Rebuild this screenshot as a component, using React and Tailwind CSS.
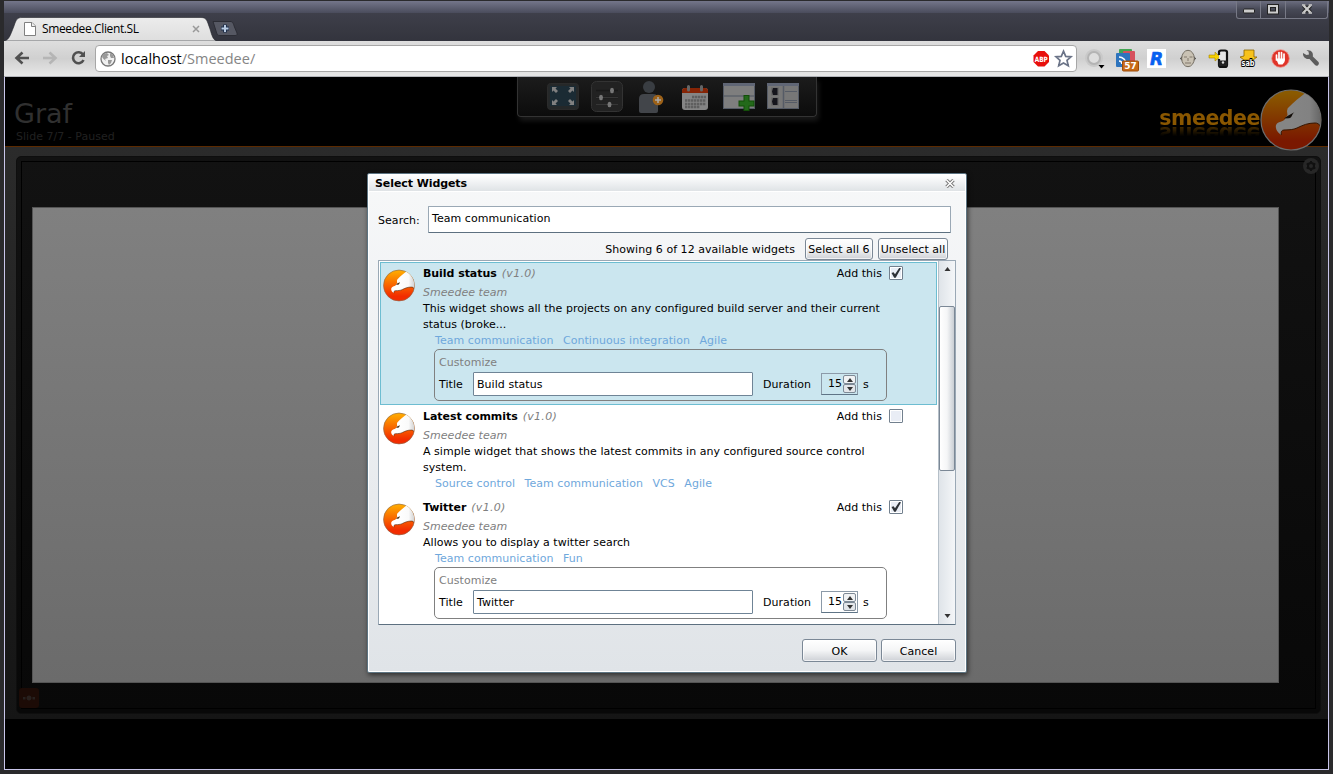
import React from "react";

const SANS = "font-['DejaVu_Sans','Liberation_Sans',sans-serif]";
const UI = "font-['Open_Sans','Noto_Sans',sans-serif]";

function Eagle({ id, className, dim }) {
  const top = dim ? "#8a5a00" : "#ffa800";
  const bottom = dim ? "#7a1800" : "#f22c00";
  return (
    <svg viewBox="0 0 62 62" className={className}>
      <defs>
        <linearGradient id={id} x1="0" y1="0" x2="0" y2="1">
          <stop offset="0.05" stopColor={top} />
          <stop offset="0.85" stopColor={bottom} />
        </linearGradient>
        <linearGradient id={id + "h"} x1="0" y1="0" x2="1" y2="0">
          <stop offset="0.3" stopColor={dim ? "#858585" : "#ffffff"} />
          <stop offset="0.75" stopColor={dim ? "#828282" : "#fafafa"} />
          <stop offset="1" stopColor={dim ? "#666666" : "#d2d2d2"} />
        </linearGradient>
      </defs>
      <circle cx="31" cy="31" r="30" fill={`url(#${id})`} stroke={dim ? "#6d6d6d" : "#8a6a50"} strokeWidth="1.2" />
      <path
        d="M44.700 4.500 C40 8 34 13 27.700 19.300 L27 22 L27.500 26 L24.300 31 C22 32.500 19 33 18 33.700 C16 35 15.500 37 16 39 C16.500 41.500 17.500 43 21.300 46 C20.800 42.500 21.500 41.300 24 41 C30 40.800 33 40.800 37 39 C43 36 48 34 55 34 C57.500 34 58.500 35 60 36.500 C63 23 56 10 44.700 4.500Z"
        fill={`url(#${id}h)`}
      />
      <path d="M21.300 46 C20.800 42.500 21.500 41.300 24 41 C30 40.800 33 40.800 37 39 C43 36 48 34 55 34 C57.500 34 58.500 35 60 36.500" fill="none" stroke="#351400" strokeWidth="1" />
      <path d={dim ? "M24 29.500 L27.500 27 L34.300 23.300 C32 25 32 29 29 29.300 Z" : "M25 29.500 L28 26.500 L33 24.500 C32 26 31.500 29 29 29.500 Z"} fill={dim ? "#120c08" : "#4a3018"} />
    </svg>
  );
}

function TabBar() {
  return (
    <div className="relative flex h-[40px] shrink-0 items-start bg-gradient-to-b from-[#74768a] via-[#4a4c5c] via-30% to-[#33343e]">
      <div className="absolute inset-x-0 top-[12px] h-[28px] bg-gradient-to-b from-[#3e3f4a] to-[#33343d]" />
      <div className="relative mt-[16px] flex h-[24px] w-[213px] items-center pl-[20px]">
        <svg viewBox="0 0 213 24" className="absolute inset-0 h-[24px] w-[213px]">
          <defs>
            <linearGradient id="tab" x1="0" y1="0" x2="0" y2="1">
              <stop offset="0" stopColor="#ececec" />
              <stop offset="1" stopColor="#dedede" />
            </linearGradient>
          </defs>
          <path d="M0 24 C5 23 6 19 10 9 C12 3 13 0.500 18 0.500 H197 C203 0.500 203 4 206 12 C208 19 209 23 213 24Z" fill="url(#tab)" stroke="#24252c" strokeWidth="0.600" />
        </svg>
        <svg viewBox="0 0 12 14" className="relative h-[14px] w-[12px]">
          <path d="M0.500 0.500 H8 L11.500 4 V13.500 H0.500Z" fill="#fff" stroke="#808080" />
          <path d="M7.500 0.500 V4.500 H11.500" fill="#eee" stroke="#808080" />
        </svg>
        <span className={`relative ml-[6px] text-[12px] leading-[16px] tracking-[-0.38px] whitespace-nowrap text-black ${UI}`}>Smeedee.Client.SL</span>
        <svg viewBox="0 0 8 8" className="relative mr-[17px] ml-auto h-[8px] w-[8px]">
          <path d="M1 1 L7 7 M7 1 L1 7" stroke="#999" strokeWidth="1.500" />
        </svg>
      </div>
      <svg viewBox="0 0 26 16" className="relative -ml-[5px] mt-[20px] h-[16px] w-[26px]">
        <path d="M1 0.500 H18 C21 0.500 21 2 22.500 6 L25 12 C25.500 14 25 14.500 23 14.500 H8 C5 14.500 5 13 4 10Z" fill="#565863" stroke="#2c2d35" />
        <path d="M13 3.500 V11.500 M9 7.500 H17" stroke="#1f2f4a" strokeWidth="4" />
        <path d="M13 4 V11 M9.500 7.500 H16.500" stroke="#b9cbe2" strokeWidth="2" />
      </svg>
      <div className="relative mr-[1px] ml-auto flex h-[18px] rounded-b-[3px] border-x border-b border-[#777986] bg-gradient-to-b from-[#6b6d7f] via-[#474956] to-[#3a3b46]">
        <div className="flex w-[24px] justify-center border-r border-[#777986]">
          <svg viewBox="0 0 12 6" className="mt-[7px] h-[6px] w-[12px]"><rect x="0.500" y="1" width="11" height="4" rx="1" fill="#ccc" stroke="#222" /></svg>
        </div>
        <div className="flex w-[25px] justify-center border-r border-[#777986]">
          <svg viewBox="0 0 12 11" className="mt-[3px] h-[11px] w-[12px]"><rect x="2" y="2" width="8" height="6.500" fill="none" stroke="#222" strokeWidth="4" /><rect x="2" y="2" width="8" height="6.500" fill="none" stroke="#ccc" strokeWidth="2" /></svg>
        </div>
        <div className="flex w-[41px] justify-center">
          <svg viewBox="0 0 12 11" className="mt-[3px] h-[11px] w-[12px]"><path d="M2.500 1.500 L9.500 8.500 M9.500 1.500 L2.500 8.500" stroke="#222" strokeWidth="4" /><path d="M2.500 1.500 L9.500 8.500 M9.500 1.500 L2.500 8.500" stroke="#ccc" strokeWidth="2.200" /><path d="M1 1 H4.500 M7.500 1 H11 M1 9 H4.500 M7.500 9 H11" stroke="#ccc" strokeWidth="1.400" /></svg>
        </div>
      </div>
    </div>
  );
}

function AddressBar() {
  return (
    <div className="flex h-[36px] shrink-0 items-start border-b border-[#b4b6bb] bg-gradient-to-b from-[#dedede] via-[#d0d0d0] to-[#e8e8e8] pt-[4px]">
      <svg viewBox="0 0 76 26" className="ml-[10px] h-[26px] w-[76px]">
        <path d="M8.500 7.500 L2.500 13 L8.500 18.500 M3 13 H15" fill="none" stroke="#505050" strokeWidth="2.600" />
        <path d="M35.500 7.500 L41.500 13 L35.500 18.500 M41 13 H29" fill="none" stroke="#b5b5b5" strokeWidth="2.600" />
        <path d="M69 9.500 A5.500 5.500 0 1 0 69.500 15" fill="none" stroke="#505050" strokeWidth="2.600" />
        <path d="M71 6 V12 H65Z" fill="#505050" />
      </svg>
      <div className="ml-[5px] flex h-[27px] w-[982px] items-center rounded-[4px] border border-[#a7a7a7] bg-white">
        <svg viewBox="0 0 16 16" className="ml-[4px] h-[16px] w-[16px]">
          <circle cx="8" cy="8" r="7" fill="#f0f0f0" stroke="#777" strokeWidth="1.300" />
          <path d="M3 3 L7 2 L9 4 L7 5 L8 7 L5 8 L6 10 L3.500 8 L2 6Z M10 2 L13 4 L14 7 L11 7 L10 5Z M8 9 L12 9 L11 12 L9 14 L8 12Z" fill="#999" />
        </svg>
        <div className={`ml-[5px] text-[14.500px] leading-[20px] tracking-[0px] whitespace-nowrap text-black ${UI}`}>localhost<span className="text-[#858585]">/Smeedee/</span></div>
        <svg viewBox="0 0 44 20" className="mr-[1px] ml-auto h-[20px] w-[44px]">
          <path d="M7 2 H13.500 L18 6.500 V13 L13.500 17.500 H7 L2.500 13 V6.500Z" fill="#e8100c" />
          <text x="3.800" y="12.600" fontSize="7.200" fontWeight="700" fill="#fff" className={SANS} textLength="13" lengthAdjust="spacingAndGlyphs">ABP</text>
          <path d="M32.500 2.200 L34.700 7.400 L40 7.800 L36 11.400 L37.300 16.800 L32.500 14 L27.700 16.800 L29 11.400 L25 7.800 L30.300 7.400Z" fill="#fff" stroke="#6b7488" strokeWidth="1.700" />
        </svg>
      </div>
      <svg viewBox="0 0 246 30" className="ml-[6px] mt-px h-[30px] w-[246px] overflow-visible">
        <g>
          <circle cx="11" cy="12" r="9" fill="#c9c9c9" /><circle cx="11" cy="12" r="6" fill="#dedede" stroke="#b4b4b4" strokeWidth="2" />
          <path d="M15.500 19 H21.500 L18.500 22.500Z" fill="#000" />
        </g>
        <rect x="36" y="3" width="13" height="11" rx="1" fill="#42a552" />
        <rect x="40" y="5" width="12" height="12" rx="1" fill="#d6515e" />
        <rect x="33" y="7" width="14" height="14" rx="1" fill="#2e74bd" />
        <path d="M36 11 A7 7 0 0 1 43 18 M36 15 A3 3 0 0 1 39 18" fill="none" stroke="#fff" strokeWidth="1.600" />
        <rect x="39.500" y="15" width="16" height="10" rx="1" fill="#c76a16" stroke="#9e4c08" />
        <text x="47.500" y="23" textAnchor="middle" fontSize="9" fontWeight="700" fill="#fff" className={SANS}>57</text>
        <rect x="64" y="3" width="19" height="19" fill="#fff" />
        <text x="73.500" y="18.500" textAnchor="middle" fontSize="17" fontWeight="700" fontStyle="italic" fill="#0860f0" stroke="#0860f0" strokeWidth="0.600" className={SANS}>R</text>
        <path d="M97 12.500 L105 4 L113 12.500 L105 21Z" fill="#333" />
        <ellipse cx="105" cy="12.500" rx="6.300" ry="8.200" fill="#c9c2b4" stroke="#777166" />
        <path d="M101 11 h3 M106.500 11 h3 M102 17 h6 M105 12 v3" stroke="#82796c" />
        <path d="M126 9 H132 V6 L137 11 L132 15 V12 H126Z" fill="#f7d100" stroke="#a48500" strokeWidth="0.600" />
        <path d="M136 9 V6 Q136 4.500 138 4.500 H142 Q144 4.500 144 6 V19 Q144 21 142 21 H138 Q136 21 136 19 V13" fill="#e4e4e4" stroke="#111" strokeWidth="2.200" />
        <path d="M135.500 14.500 H144.500 V20 H135.500Z" fill="#222" /><circle cx="140" cy="16.500" r="1.200" fill="#ddd" />
        <path d="M161 4 H171 V11 H174 L170 14 H161 L157 11 L161 10Z" fill="#f7c21c" stroke="#8a6500" strokeWidth="0.800" />
        <text x="158.500" y="20" fontSize="8.500" fontWeight="700" fill="#fff" stroke="#000" strokeWidth="2" paintOrder="stroke" className={SANS} textLength="13" lengthAdjust="spacingAndGlyphs">sab</text>
        <circle cx="197.500" cy="12.500" r="8.800" fill="#df3429" stroke="#ef8e86" strokeWidth="0.800" />
        <path d="M193.500 9 V14 M196 6.500 V13 M198.500 6.500 V13 M201 8 V14" stroke="#fff" strokeWidth="1.700" strokeLinecap="round" />
        <path d="M193 12.500 H202 L201.500 16 L199.500 18.500 H195.500Z" fill="#fff" />
        <path d="M220 7 L223.500 9 L226 8.500 L225.500 5.500 L223.500 4.500 C228.500 3.500 230.500 7 229.800 10.500 L235.500 16 C237 18.500 234 21 232 19 L226.500 13 C223 13.500 219.500 11 220 7Z" fill="#5c5c5c" />
      </svg>
    </div>
  );
}

const DimIcon = ({ children }) => <svg viewBox="0 0 32 36" className="h-[36px] w-[32px]">{children}</svg>;

function Toolbar() {
  return (
    <div className="absolute top-0 left-[512px] flex h-[40px] w-[300px] gap-[12px] rounded-b-[4px] border-x border-b border-[#333] bg-gradient-to-b from-[#1c1c1c] to-[#0c0c0c] pt-[2px] pl-[29px] shadow-[2px_4px_5px_#181818]">
      <DimIcon>
        <rect x="0.500" y="4.500" width="31" height="26" rx="3" fill="#252829" stroke="#2b2b2b" />
        <rect x="3" y="7" width="26" height="20" fill="#1b2b34" />
        <path d="M5 8 H10 L8.500 9.500 L11 12 L9 14 L6.500 11.500 L5 13Z M27 8 H22 L23.500 9.500 L21 12 L23 14 L25.500 11.500 L27 13Z M5 26 H10 L8.500 24.500 L11 22 L9 20 L6.500 22.500 L5 21Z M27 26 H22 L23.500 24.500 L21 22 L23 20 L25.500 22.500 L27 21Z" fill="#808080" />
      </DimIcon>
      <DimIcon>
        <rect x="0.500" y="2.500" width="31" height="30" rx="5" fill="#222" stroke="#333" />
        <path d="M5 11.500 H27 M5 18.500 H27" stroke="#191919" strokeWidth="1.500" />
        <path d="M5 18.500 H27 M5 25.500 H27" stroke="#363636" />
        <g fill="#777"><ellipse cx="21" cy="11.500" rx="2" ry="2.700" /><ellipse cx="10" cy="18.500" rx="2" ry="2.700" /><ellipse cx="18.500" cy="25.500" rx="2" ry="2.700" /></g>
      </DimIcon>
      <DimIcon>
        <circle cx="14" cy="8" r="6" fill="#393d42" />
        <path d="M4 20 Q4 15 9 15 H18 Q23 15 23 20 V32 Q23 34 21 34 H6 Q4 34 4 32Z" fill="#42454a" />
        <circle cx="23" cy="21" r="5.300" fill="#9c6118" />
        <path d="M23 18 V24 M20 21 H26" stroke="#aaa" strokeWidth="1.500" />
      </DimIcon>
      <DimIcon>
        <rect x="3" y="9" width="26" height="22" rx="3" fill="#858585" />
        <path d="M3 14 V12 Q3 9 6 9 H26 Q29 9 29 12 V14Z" fill="#862405" />
        <path d="M9.500 7.500 V11 M22.500 7.500 V11" stroke="#666" strokeWidth="3" strokeLinecap="round" />
        <path d="M13 18 H27 M6 21.500 H27 M6 25 H27 M6 28 H21" stroke="#5f5f5f" strokeWidth="2.600" strokeDasharray="2.400 0.600" />
      </DimIcon>
      <DimIcon>
        <rect x="0.500" y="4.500" width="31" height="25" fill="#7e7e7e" stroke="#555b66" />
        <path d="M0 5.500 H32" stroke="#606675" strokeWidth="3" />
        <path d="M0 17 H32" stroke="#555b66" strokeWidth="1.200" />
        <path d="M23.500 16 V32 M15.500 24.500 H31.500" stroke="#134e08" strokeWidth="6" />
        <path d="M23.500 17 V31 M16.500 24.500 H30.500" stroke="#23691a" strokeWidth="4" />
      </DimIcon>
      <DimIcon>
        <rect x="0.500" y="4.500" width="31" height="25" fill="#777" stroke="#555b66" />
        <path d="M0 5.500 H32" stroke="#606675" strokeWidth="3" />
        <rect x="4" y="8.500" width="8" height="8" fill="#686868" /><path d="M6 9 H10.500 V16 H6 L5 12.500Z" fill="#15151c" />
        <rect x="4" y="18.500" width="8" height="8" fill="#686868" /><path d="M6 19 H10.500 V26 H6 L5 22.500Z" fill="#15151c" />
        <path d="M16.500 7 V30" stroke="#555b66" strokeWidth="1.500" />
        <path d="M18 12.500 H30 M18 21.500 H30 M18 23.500 H30" stroke="#555b66" />
      </DimIcon>
    </div>
  );
}

function Stage() {
  return (
    <div className={`relative flex min-h-0 flex-1 flex-col bg-black ${SANS}`}>
      <header className="relative flex h-[70px] shrink-0 items-start justify-between border-b border-[#5c2a00] bg-black">
        <div className="pl-[9px]">
          <h1 className="mt-[21px] text-[27px] leading-[32px] text-[#303030]">Graf</h1>
          <p className="ml-[2px] text-[11px] leading-[14px] tracking-[0.02px] text-[#202020]">Slide 7/7 - Paused</p>
        </div>
        <div className="relative z-10 flex pr-[6px]">
          <span className="mt-[28px] h-[27px] text-[20.500px] leading-[27px] font-bold tracking-[-0.45px] text-[#8a5700] [-webkit-box-reflect:below_-12px_linear-gradient(transparent_40%,#00000099_85%)]">smeedee</span>
          <Eagle id="big" dim className="mt-[12px] h-[62px] w-[62px]" />
        </div>
      </header>
      <Toolbar />
      <main className="flex h-[572px] shrink-0 bg-gradient-to-b from-[#2b2b2b] to-[#151515] pt-[9px] pr-[7px] pb-[5px] pl-[11px]">
        <section className="relative flex flex-1 rounded-[5px] border border-[#0e0e0e] bg-gradient-to-b from-[#121212] to-[#080808] p-[4px]">
          <div className="flex flex-1 border border-black pt-[45px] pr-[36px] pb-[25px] pl-[10px]">
            <div className="flex-1 border border-[#555] bg-gradient-to-b from-[#808080] to-[#6b6b6b]" />
          </div>
          <svg viewBox="0 0 16 16" className="absolute top-[1px] right-[1px] h-[16px] w-[16px]">
            <circle cx="8" cy="8" r="8" fill="#272727" />
            <circle cx="8" cy="8" r="3" fill="none" stroke="#111" strokeWidth="2" />
            <path d="M8 3 V5 M8 11 V13 M3.700 5.500 L5.500 6.500 M10.500 9.500 L12.300 10.500 M3.700 10.500 L5.500 9.500 M10.500 6.500 L12.300 5.500" stroke="#111" strokeWidth="2" />
          </svg>
          <svg viewBox="0 0 20 20" className="absolute bottom-[5px] left-[2px] h-[20px] w-[20px]">
            <rect width="20" height="20" rx="3" fill="#1c0b06" />
            <circle cx="10" cy="10" r="2" fill="#2a201c" stroke="#282424" /><rect x="4" y="9" width="2.500" height="2.500" fill="#26211f" /><rect x="13.500" y="9" width="2.500" height="2.500" fill="#26211f" />
          </svg>
        </section>
      </main>
    </div>
  );
}

function Check({ on }) {
  return (
    <span className="mb-[2px] flex h-[14px] w-[14px] items-center justify-center rounded-[1px] border border-[#72808e] bg-white p-px">
      <svg viewBox="0 0 10 10" className="h-[10px] w-[10px]">
        <rect width="10" height="10" fill="#e9edf5" />
        {on && <path d="M0.500 5 L2.600 4.200 L4 6.300 L8.200 0 L10 0.300 L4.700 9.800 L3.200 9.800Z" fill="#2c3035" />}
      </svg>
    </span>
  );
}

function Arrow({ down, className }) {
  return <svg viewBox="0 0 6 4" className={className}><path d={down ? "M0 0 H6 L3 4Z" : "M0 4 H6 L3 0Z"} fill="#333" /></svg>;
}

function Widget({ id, name, text, tags, on, selected }) {
  return (
    <article className={selected ? "flex h-[143px] shrink-0 border border-[#6dbdd1] bg-[#cbe6ef] pt-[3px] pl-[2px]" : on ? "flex h-[143px] shrink-0 pt-[4px] pl-[3px]" : "flex h-[91px] shrink-0 pt-[4px] pl-[3px]"}>
      <Eagle id={id} className="mt-[3px] h-[33px] w-[32px] shrink-0" />
      <div className="ml-[8px] flex w-[480px] flex-col">
        <div className="flex h-[16px] items-center">
          <b className="tracking-[-0.05px]">{name}</b>
          <i className="ml-[5px] tracking-[0.3px] text-[#808080]">(v1.0)</i>
          <span className="mr-[7px] ml-auto">Add this</span>
          <Check on={on} />
        </div>
        <i className="mt-[3px] h-[16px] text-[#808080]">Smeedee team</i>
        {text.map((line) => <p key={line} className="h-[16px] tracking-[0.03px] whitespace-nowrap">{line}</p>)}
        <div className="flex h-[16px] gap-[9.500px] pl-[12px] text-[#6fa8dc]">{tags.map((t) => <span key={t}>{t}</span>)}</div>
        {on && (
          <div className="ml-[11px] flex h-[52px] w-[453px] flex-col rounded-[5px] border border-[#808080] pl-[4px]">
            <div className="mt-[5px] h-[16px] text-[#808080]">Customize</div>
            <div className="mt-[1px] flex h-[24px] items-center">
              <span className="w-[34px] pt-[2px]">Title</span>
              <div className="flex h-[24px] w-[280px] items-center rounded-[1px] border border-[#6f8496] bg-white pt-[2px] pl-[3px]">{name}</div>
              <span className="ml-[10px] w-[58px] pt-[2px]">Duration</span>
              <div className="flex h-[22px] w-[37px] items-center border border-[#8c9aa8] border-b-[#5f7486] pl-[6px]">
                <span>15</span>
                <span className="mr-px ml-auto flex flex-col">
                  <span className="flex h-[9px] w-[13px] items-center justify-center rounded-[2px] border border-[#7e8a96] bg-[#f0f2f4]"><Arrow className="h-[4px] w-[6px]" /></span>
                  <span className="flex h-[9px] w-[13px] items-center justify-center rounded-[2px] border border-[#7e8a96] bg-[#e3e6ea]"><Arrow down className="h-[4px] w-[6px]" /></span>
                </span>
              </div>
              <span className="ml-[5px] pt-[2px]">s</span>
            </div>
          </div>
        )}
      </div>
    </article>
  );
}

const WIDGETS = [
  { id: "w1", name: "Build status", on: true, selected: true, text: ["This widget shows all the projects on any configured build server and their current", "status (broke..."], tags: ["Team communication", "Continuous integration", "Agile"] },
  { id: "w2", name: "Latest commits", text: ["A simple widget that shows the latest commits in any configured source control", "system."], tags: ["Source control", "Team communication", "VCS", "Agile"] },
  { id: "w3", name: "Twitter", on: true, text: ["Allows you to display a twitter search"], tags: ["Team communication", "Fun"] },
];

const BTN = "flex items-center justify-center rounded-[3px] border border-[#7b8896] bg-gradient-to-b from-white via-[#f4f5f6] to-[#ced1d6] pt-[2px] whitespace-nowrap shadow-[inset_0_0_0_1px_#ffffffb0]";

function Dialog() {
  return (
    <div role="dialog" className={`absolute top-[173px] left-[367px] flex h-[500px] w-[600px] flex-col rounded-[2px] border border-[#5d7482] bg-gradient-to-b from-[#f7f8f9] to-[#e0e4e8] text-[11px] leading-[16px] tracking-[0.045px] text-black shadow-[1px_2px_5px_#00000090,inset_0_0_0_1px_#fff] ${SANS}`}>
      <div className="mx-px mt-px flex h-[17px] items-center justify-between border-b border-white bg-gradient-to-b from-white to-[#dfe3e6] pr-[10px] pl-[6px]">
        <b className="pt-[2px] tracking-[-0.08px]">Select Widgets</b>
        <svg viewBox="0 0 10 9" className="h-[9px] w-[10px]">
          <path d="M1.500 1 L8.500 8 M8.500 1 L1.500 8" stroke="#777" strokeWidth="3.400" />
          <path d="M1.500 1 L8.500 8 M8.500 1 L1.500 8" stroke="#fff" strokeWidth="1.500" />
        </svg>
      </div>
      <div className="mt-[14px] flex h-[27px] items-center pl-[10px]">
        <span className="w-[50px] pt-[2px]">Search:</span>
        <div className="h-[27px] w-[523px] rounded-[1px] border border-[#9aa8b5] border-b-[#5d7080] bg-white pt-[4px] pl-[3px]">Team communication</div>
      </div>
      <div className="mt-[5px] flex h-[22px] items-center justify-end pr-[18px]">
        <span className="mr-[10px] pt-[2px]">Showing 6 of 12 available widgets</span>
        <div className={`h-[22px] w-[68px] ${BTN}`}>Select all 6</div>
        <div className={`ml-[5px] h-[22px] w-[70px] ${BTN}`}>Unselect all</div>
      </div>
      <div className="ml-[10px] flex h-[365px] w-[578px] rounded-[1px] border border-[#9aa8b5] border-b-[#5d7080] bg-white">
        <div className="flex w-[559px] flex-col overflow-hidden pt-px pr-[1px] pl-px">
          {WIDGETS.map((w) => <Widget key={w.id} {...w} />)}
        </div>
        <div className="flex w-[17px] flex-col items-center border-l border-[#b5bfc8] bg-gradient-to-r from-[#dfe4e9] to-[#f4f6f8]">
          <Arrow className="mt-[6px] h-[4px] w-[7px] shrink-0" />
          <div className="mt-[35px] h-[165px] w-[16px] shrink-0 rounded-[2px] border border-[#7b8896] bg-gradient-to-r from-white via-[#f5f6f7] to-[#c9ced4]" />
          <Arrow down className="mt-auto mb-[6px] h-[4px] w-[7px] shrink-0" />
        </div>
      </div>
      <div className="mt-[14px] flex gap-[4px] pl-[434px]">
        <div className={`h-[23px] w-[75px] ${BTN}`}>OK</div>
        <div className={`h-[23px] w-[75px] ${BTN}`}>Cancel</div>
      </div>
    </div>
  );
}

export default function App() {
  return (
    <div className="relative flex h-[774px] w-[1333px] flex-col overflow-hidden bg-[#2a2a2c] pt-[1px] pr-[4px] pb-[4px] pl-[4px]">
      <div className="flex min-h-0 flex-1 flex-col rounded-t-[4px] border-x border-t border-b border-[#c9c6ea] border-t-[#9799a8]">
        <div className="-mx-px -mt-px flex flex-col">
          <TabBar />
          <AddressBar />
        </div>
        <Stage />
      </div>
      <Dialog />
    </div>
  );
}
